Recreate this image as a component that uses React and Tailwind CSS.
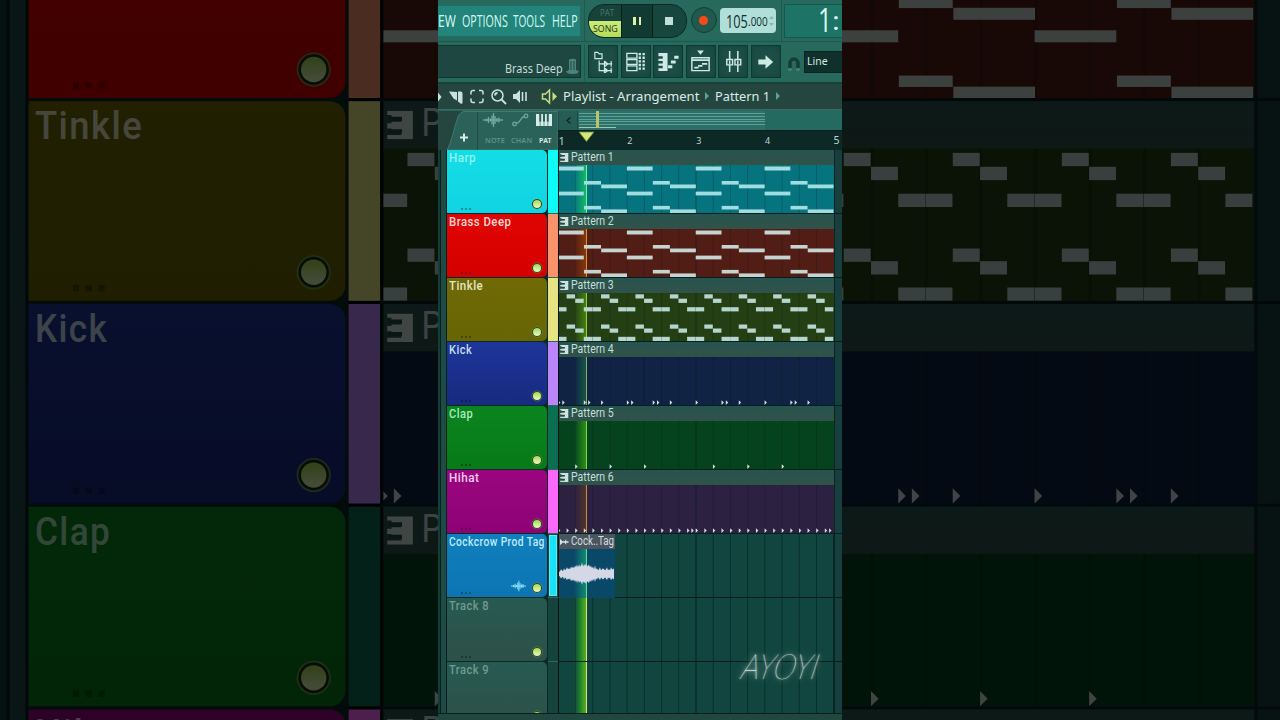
import { useLayoutEffect, useRef, useState } from "react";
import clsx from "clsx";

const BAR = 68.85;
const BEAT = BAR / 4;

const chordNotes = [0, 1, 2, 3].flatMap((bar) => [
	{ x: bar * BAR, y: 16.5, w: 25.8, h: 4 },
	{ x: bar * BAR + 26, y: 31, w: 17, h: 3.6 },
	{ x: bar * BAR + 43.2, y: 34.5, w: 25.8, h: 3.8 },
	{ x: bar * BAR, y: 41.6, w: 25.8, h: 3.8 },
	{ x: bar * BAR + 26, y: 55.9, w: 17, h: 3.6 },
	{ x: bar * BAR + 43.2, y: 59.4, w: 25.8, h: 3.8 },
]);

const arpHigh = [29.2, 16.3, 20.7, 29.2];
const arpLow = [58.8, 46.5, 50.5, 58.8];
const arpNotes = Array.from({ length: 32 }).flatMap((_, i) => [
	{ x: i * (BEAT / 2), y: arpHigh[i % 4], w: 8.5, h: 4.2 },
	{ x: i * (BEAT / 2), y: arpLow[i % 4], w: 8.5, h: 4.2 },
]);

const TRACKS = [
	{
		name: "Harp",
		nameWidth: 27,
		nameColor: "text-[#8ff3f0]",
		header: "bg-linear-to-b from-[#14dde4] to-[#12d3e4]",
		strip: "bg-[#0dfdf6]",
		pattern: "Pattern 1",
		body: "bg-[#06747f]",
		notes: chordNotes,
		noteColor: "#9fdde2",
		glow: "from-[#19a36000] to-[#12b868]",
		line: "bg-[#6df49a]",
	},
	{
		name: "Brass Deep",
		nameWidth: 62,
		nameColor: "text-[#ffd9d3]",
		header: "bg-linear-to-b from-[#e00503] to-[#d40000]",
		strip: "bg-[#f9936b]",
		pattern: "Pattern 2",
		body: "bg-[#521d14]",
		notes: chordNotes,
		noteColor: "#c6d3d0",
		glow: "from-[#8a3a0000] to-[#85380a]",
		line: "bg-[#e08a3c]",
	},
	{
		name: "Tinkle",
		nameWidth: 34,
		nameColor: "text-[#e6e6c4]",
		header: "bg-linear-to-b from-[#6f6a05] to-[#676505]",
		strip: "bg-[#e5e386]",
		pattern: "Pattern 3",
		body: "bg-[#243f14]",
		notes: arpNotes,
		noteColor: "#b6d5cd",
		glow: "from-[#3a6a0000] to-[#43800f]",
		line: "bg-[#a5c83a]",
	},
	{
		name: "Kick",
		nameWidth: 23,
		nameColor: "text-[#c5def2]",
		header: "bg-linear-to-b from-[#1d369a] to-[#182a80]",
		strip: "bg-[#bb86fb]",
		pattern: "Pattern 4",
		body: "bg-[#102344]",
		hits: [0, 1, 6, 7, 10, 16, 17, 22, 23, 26, 32, 38, 39, 42, 48, 54, 55, 58],
		glow: "from-[#145a4800] to-[#165648]",
		line: "bg-[#8fae62]",
	},
	{
		name: "Clap",
		nameWidth: 24,
		nameColor: "text-[#a9ecbd]",
		header: "bg-linear-to-b from-[#0b8420] to-[#087a18]",
		strip: "bg-[#0b6e50]",
		pattern: "Pattern 5",
		body: "bg-[#05431f]",
		hits: [4, 12, 20, 36, 44, 52],
		glow: "from-[#1a7a1000] to-[#2c8f18]",
		line: "bg-[#7fd83c]",
	},
	{
		name: "Hihat",
		nameWidth: 30,
		nameColor: "text-[#f6cdf0]",
		header: "bg-linear-to-b from-[#9a067f] to-[#8e0276]",
		strip: "bg-[#fa68fa]",
		pattern: "Pattern 6",
		body: "bg-[#2c2140]",
		hits: [...Array.from({ length: 32 }, (_, i) => i * 2), 31, 63],
		glow: "from-[#5a302000] to-[#50342a]",
		line: "bg-[#c78f3e]",
	},
	{
		name: "Cockcrow Prod Tag",
		nameWidth: 96,
		nameColor: "text-[#bfeaff]",
		header: "bg-linear-to-b from-[#0f80bd] to-[#0d74b2]",
		strip: "bg-[#16e2f8]",
		audio: "Cock..Tag",
	},
	{
		name: "Track 8",
		nameWidth: 40,
		nameColor: "text-[#6f9c92]",
		header: "bg-linear-to-b from-[#275a51] to-[#2c5148]",
	},
	{
		name: "Track 9",
		nameWidth: 40,
		nameColor: "text-[#6f9c92]",
		header: "bg-linear-to-b from-[#275a51] to-[#2c5148]",
	},
];

// peaks of the tag sample, one per pixel
const PEAKS = [
	1, 2, 3, 5, 4, 3, 6, 4, 5, 7, 5, 6, 5, 8, 6, 8, 6, 9, 7, 10, 7, 10, 8, 9, 12,
	8, 10, 9, 11, 8, 9, 10, 7, 9, 6, 8, 5, 9, 5, 6, 4, 5, 7, 4, 5, 6, 5, 4, 5, 7,
	4, 5, 4, 7, 5, 5, 6,
];

// Squeezes or stretches a label to a fixed width
const Fit = ({ w, className, children }) => {
	const ref = useRef(null);
	const [scale, setScale] = useState(1);

	useLayoutEffect(() => {
		setScale(w / ref.current.offsetWidth);
	}, [w]);

	return (
		<span className="flex whitespace-nowrap" style={{ width: w }}>
			<span
				ref={ref}
				className={clsx("shrink-0 origin-left", className)}
				style={{ transform: `scaleX(${scale})` }}
			>
				{children}
			</span>
		</span>
	);
};

const Led = () => (
	<svg className="size-[12px]" viewBox="0 0 12 12">
		<defs>
			<linearGradient id="led" x1="0" y1="0" x2="0" y2="1">
				<stop offset="0.1" stopColor="#a8dc58" />
				<stop offset="0.8" stopColor="#dff4b2" />
			</linearGradient>
		</defs>
		<circle cx="6" cy="6" r="5.1" fill="#16300f" stroke="#9fbf7a" strokeOpacity="0.6" strokeWidth="0.6" />
		<circle cx="6" cy="6" r="4" fill="url(#led)" />
	</svg>
);

const Waveform = ({ className, color = "#6fa79f" }) => (
	<svg className={className} viewBox="0 0 20 14" stroke={color} strokeWidth="1.3">
		<path d="M0 7H20M3.5 5.5v3M5.5 4v6M7.5 5.5v3M9 2.5v9M10.5 0v14M12 3v8M14 5v4M16 4.5v5" />
	</svg>
);

const ClipIcon = () => (
	<svg className="w-[8.5px] h-[9px] shrink-0" viewBox="0 0 9 10">
		<path
			d="M0 0H9V10H0V8.500H5V6.900H1.500V6.200H0V4.400H1.500V3.900H5V2.600H1.500V1.500H0Z"
			fill="#cfe3de"
		/>
		<path d="M0.500 2.100H5.200V3.500H0.500ZM0.500 6.500H5.200V7.900H0.500Z" fill="#244a45" />
	</svg>
);

const Playhead = ({ glow, line }) => (
	<div className="absolute left-0 inset-y-0 w-[29px] flex">
		<div className="w-[16px]" />
		<div className={clsx("w-[12px] bg-linear-to-r", glow)} />
		<div className={clsx("w-px", line)} />
	</div>
);

const GridLines = ({ from = 0, count = 17, soft }) => (
	<svg className="absolute inset-0 size-full" preserveAspectRatio="none">
		{Array.from({ length: count }, (_, i) => i + from).map((i) => (
			<line
				key={i}
				x1={i * BEAT + 0.3}
				x2={i * BEAT + 0.3}
				y1="0"
				y2="100%"
				stroke="#021615"
				strokeOpacity={(i % 8 === 0 ? 0.8 : 0.45) * (soft ? 0.5 : 1)}
			/>
		))}
	</svg>
);

const PatternClip = ({ track }) => (
	<div className="relative flex flex-col w-[276px] h-[63px]">
		<div className="h-[15px] flex items-center gap-[2px] pl-[2.5px] bg-linear-to-b from-[#27544f] to-[#305248]">
			<ClipIcon />
			<Fit w={43} className="text-[12px] leading-[15px] text-[#c5ded6]">
				{track.pattern}
			</Fit>
		</div>
		<div className={clsx("relative flex-1", track.body)}>
			<GridLines count={16} soft />
			<Playhead glow={track.glow} line={track.line} />
		</div>
		<svg className="absolute inset-0 w-[276px] h-[63px]">
			{track.notes?.map((n, i) => (
				<rect
					key={i}
					x={n.x}
					y={n.y}
					width={n.w}
					height={n.h}
					fill={track.noteColor}
				/>
			))}
			{track.hits?.map((hit) => (
				<path
					key={hit}
					d={`M${hit * (BEAT / 4)} 58.2l2.4 2.4l-2.4 2.4z`}
					fill="#cfe3e3"
				/>
			))}
		</svg>
	</div>
);

const AudioClip = ({ name }) => (
	<div className="relative flex flex-col w-[57px] h-[64px]">
		<div className="h-[15px] flex items-center gap-[2px] pl-[2.5px] bg-[#48575f]">
			<svg className="w-[8.5px] h-[8px] shrink-0" viewBox="0 0 9 8" fill="#dcdfe6">
				<path d="M0 0.5L3.5 4L0 7.5ZM3 3.3H9V4.7H3ZM4.2 4L6.5 1.2V6.8Z" />
			</svg>
			<Fit w={43} className="text-[12px] leading-[15px] text-[#d6dade]">
				{name}
			</Fit>
		</div>
		<div className="relative flex-1 bg-[#0a4867]">
			<Playhead glow="from-[#0a706800] to-[#128a72]" line="bg-[#5de08c]" />
			<svg className="absolute inset-0 size-full" viewBox="0 0 57 49">
				<path
					d={`M0 25${PEAKS.map((p, i) => `L${i} ${25 - p * 0.95}`).join("")}${PEAKS.map(
						(_, i) => {
							const x = PEAKS.length - 1 - i;
							return `L${x} ${25 + PEAKS[x] * 0.9}`;
						},
					).join("")}Z`}
					fill="#d3d7e6"
				/>
			</svg>
		</div>
	</div>
);

const TrackRow = ({ track }) => (
	<div className="flex h-16 shrink-0">
		<div className="w-[101.3px] bg-[#0b2a26] pb-px">
			<div
				className={clsx(
					"relative w-[100px] h-[63px] rounded-r-[5px] pl-[2px]",
					track.header,
				)}
			>
				<Fit
					w={track.nameWidth}
					className={clsx(
						"text-[12.5px] leading-[16px] tracking-[0.04em] font-medium",
						track.nameColor,
					)}
				>
					{track.name}
				</Fit>
				<div className="absolute left-[14px] bottom-[3.5px] flex gap-[2.4px]">
					{[0, 1, 2].map((i) => (
						<span key={i} className="size-[1.6px] bg-black/30" />
					))}
				</div>
				{track.audio && (
					<Waveform
						className="absolute left-[64px] top-[46px] w-[15px] h-[12px]"
						color="#8fe6ff"
					/>
				)}
				<div className="absolute left-[84.3px] top-[48px]">
					<Led />
				</div>
			</div>
		</div>
		<div
			className={clsx(
				"w-[9.5px] h-[63px]",
				track.strip || "bg-[#15443d]",
				track.audio && "border border-[#0a4a58] ring-1 ring-inset ring-[#7be0e0]",
			)}
		/>
		<div className="relative flex-1 border-b border-[#04201e] bg-[#10463f]">
			<GridLines from={0} />
			{!track.pattern && (
				<Playhead glow="from-[#16604600] via-[#1d7f2c] to-[#58b016]" line="bg-[#d6e27a]" />
			)}
			<div className="absolute left-0 top-0">
				{track.pattern && <PatternClip track={track} />}
				{track.audio && <AudioClip name={track.audio} />}
			</div>
			<div className="absolute left-0 inset-y-0 w-[0.7px] bg-[#03110f]" />
			<div className="absolute left-[276px] inset-y-0 right-0 border-l border-[#0a2624] bg-[#173f3e]" />
		</div>
	</div>
);

const TrackArea = ({ tracks, className }) => (
	<div className={clsx("flex overflow-hidden font-['Roboto',sans-serif]", className)}>
		<div className="w-[9.2px] flex bg-[#1f4b45] border-r border-[#06201d]">
			<div className="w-[3px] bg-[#143c38] border-r border-[#071f1d]" />
		</div>
		<div className="flex-1 flex flex-col">
			{tracks.map((track) => (
				<TrackRow key={track.name} track={track} />
			))}
		</div>
	</div>
);

const ToolButton = ({ children }) => (
	<div className="w-[30px] h-[33px] border border-[#0c3a34] bg-[#1d4e47] shadow-[inset_0_0_6px_#16423b] grid place-items-center">
		<svg className="size-[23px]" viewBox="0 0 24 24" fill="none" stroke="#cdeae4" strokeWidth="1.5">
			{children}
		</svg>
	</div>
);

const Transport = () => (
	<div className="h-[42px] flex items-start border-b border-[#1a594f]">
		<div className="w-[142px] h-[32px] mt-[5px] bg-[#22847a] flex items-center border-y border-[#1c6f66] overflow-hidden font-['Open_Sans',sans-serif] text-[16px] leading-[28px] pb-[1px] text-[#d6fbf5]">
			<Fit w={18}>EW</Fit>
			<span className="w-[6px]" />
			<Fit w={46}>OPTIONS</Fit>
			<span className="w-[5px]" />
			<Fit w={32}>TOOLS</Fit>
			<span className="w-[7px]" />
			<Fit w={26}>HELP</Fit>
		</div>
		<div className="ml-[4px] w-px h-[42px] bg-[#1a5a50]" />
		<div className="ml-[3px] mt-[4px] w-[99px] h-[34px] rounded-[16px] overflow-hidden border border-[#0a2a24] bg-[#103a32] flex">
			<div className="w-[33px] flex flex-col items-center font-['Open_Sans',sans-serif] border-r border-[#06201b]">
				<div className="h-[16px] w-full bg-[#174239] text-[9px] leading-[16px] flex justify-center pl-[3px] text-[#4c7a6f]">
					<Fit w={14}>PAT</Fit>
				</div>
				<div className="flex-1 w-full grid place-items-center bg-linear-to-b from-[#cdea7c] to-[#b5dc5a] text-[#1c3418] text-[9.5px] leading-[12px]">
					<Fit w={25}>SONG</Fit>
				</div>
			</div>
			<div className="w-[31px] flex items-center justify-center gap-[3px] border-r border-[#06201b]">
				<span className="w-[2.5px] h-[8px] bg-[#dff0a8]" />
				<span className="w-[2.5px] h-[8px] bg-[#dff0a8]" />
			</div>
			<div className="flex-1 flex items-center pl-[12px] bg-[#17463d]">
				<span className="size-[8px] bg-[#c2ded8]" />
			</div>
		</div>
		<div className="ml-[3.5px] mt-[7px] size-[26px] rounded-full border border-[#123f37] bg-[#22594f] grid place-items-center">
			<span className="size-[9px] rounded-full bg-[#fb4a16]" />
		</div>
		<div className="ml-[3.5px] mt-[8px] w-[56px] h-[25px] rounded-[4px] bg-[#b0ded8] flex items-center pl-[6px] font-['Open_Sans',sans-serif] text-[#12302c]">
			<Fit w={22} className="text-[18px] leading-6">
				105
			</Fit>
			<Fit w={20} className="text-[12px] leading-6 pt-[3px]">
				.000
			</Fit>
			<svg className="ml-[1px] w-[5px] h-[12px]" viewBox="0 0 5 12" fill="#8cb8b2">
				<path d="M0 4L2.5 1L5 4ZM0 8L2.5 11L5 8Z" />
			</svg>
		</div>
		<div className="ml-[5px] w-px h-[42px] bg-[#1a5a50]" />
		<div className="ml-[2px] mt-[4px] flex-1 h-[34px] border border-r-0 border-[#16564c] bg-[#1d7466] pl-[33px] overflow-hidden font-['Open_Sans',sans-serif] text-[33px] leading-[30px] text-[#d9f7ee] flex">
			<Fit w={14}>1</Fit>
			<Fit w={8} className="text-[26px]">:</Fit>
		</div>
	</div>
);

const Shortcuts = () => (
	<div className="h-[42px] pt-[3px] flex items-start border-b-2 border-[#164239]">
		<div className="w-[143px] h-[33px] bg-[#1e4741] border border-l-0 border-[#113630] flex items-end justify-end pr-[1px] font-['Noto_Sans',sans-serif] text-[12px] leading-[16px] text-[#c3dcd6]">
			<Fit w={58}>Brass Deep</Fit>
			<svg className="ml-[3px] mb-[3px] w-[13px] h-[16px]" viewBox="0 0 13 16">
				<path
					d="M3 1.5Q6.5 0 10 1.5V12L13 13.5Q12 16 6.5 16T0 13.5L3 12Z"
					fill="#4a857b"
				/>
				<path d="M5 3V12M8 3V12" stroke="#1f4b44" strokeWidth="1" />
			</svg>
		</div>
		<div className="ml-[3px] w-px h-[36px] bg-[#1a5a50]" />
		<div className="ml-[3px] flex gap-[2.6px]">
			<ToolButton>
				<path d="M3 9V2.5H6L7.5 4H10.5V9ZM7.5 11V21.5H12M7.5 14.500H12" strokeWidth="1.2" />
				<path d="M11 14.5H21M13 11.500V17.500L16.500 14.500L13 11.500M20 11.500V17.500M13 18.500V24L16.500 21.500ZM11 21.500H21M20 18.500V24" strokeWidth="1.2" />
			</ToolButton>
			<ToolButton>
				<path d="M3 3.500H13.500V8.500H3ZM3 10H13.500V15H3ZM3 16.500H13.500V21.500H3Z" strokeWidth="1.4" />
				<path d="M16.500 3V22M20.500 3V22" strokeWidth="2.4" strokeDasharray="2.500 1.300" />
			</ToolButton>
			<ToolButton>
				<path d="M1.500 3H11V22H1.500V19H6V16.500H1.500V14H6V11.500H1.500V9H6V6.500H1.500Z" fill="#cdeae4" stroke="none" />
				<path d="M11.500 17.500H16M14.500 12.500H19.500M18 7.500H22.500" strokeWidth="3" />
			</ToolButton>
			<ToolButton>
				<path d="M8.500 0.500H15.500L12 5Z" fill="#cdeae4" stroke="none" />
				<path d="M3 8H21V21.500H3Z" strokeWidth="1.5" />
				<path d="M3 10.500H21M5.500 18.500H10M9.500 16.500H14M13.500 14.500H19" strokeWidth="1.8" />
			</ToolButton>
			<ToolButton>
				<path d="M8 1V23M16.500 1V23" strokeWidth="1.6" />
				<path d="M5 10H11V15.500H5ZM13.500 10H19.500V15.500H13.500Z" fill="#1d4e47" />
				<path d="M8 11V14.500M16.500 11V14.500" />
			</ToolButton>
			<ToolButton>
				<path d="M4.500 10H12V5.500L20 12.500L12 19.500V15H4.500Z" fill="#cdeae4" stroke="none" />
			</ToolButton>
		</div>
		<svg className="ml-[7px] mt-[12px] w-[12px] h-[14px]" viewBox="0 0 12 14">
			<path d="M2 11V6A4 4 0 0 1 10 6V11" fill="none" stroke="#153f38" strokeWidth="3.6" />
			<path d="M0.200 12.500H3.800M8.200 12.500H11.800" stroke="#4e8a7e" strokeWidth="2" />
		</svg>
		<div className="ml-[4px] mt-[6px] flex-1 h-[22px] bg-[#10302b] border border-r-0 border-[#0b2420] pl-[2px] font-['Noto_Sans',sans-serif] text-[11.5px] leading-[17px] text-[#d3e9e2]">
			<Fit w={21}>Line</Fit>
		</div>
	</div>
);

const Crumb = () => (
	<svg className="w-[4px] h-[8px] shrink-0" viewBox="0 0 4 8">
		<path d="M0 0L4 4L0 8Z" fill="#5aa297" />
	</svg>
);

const TitleBar = () => (
	<div className="h-[26px] flex items-center bg-[#25463f] border-b border-[#3b6a61] font-['Noto_Sans',sans-serif] text-[13px] leading-[24px] text-[#d6ece6]">
		<svg className="w-[125px] h-[25px] shrink-0" viewBox="0 0.500 125 25" fill="none" stroke="#c9e3dc" strokeWidth="1.5">
			<path d="M0 9L3.500 13.500L0 18Z" fill="#c9e3dc" stroke="none" />
			<path d="M11 8L19 8.500V17L15.500 15Z" fill="#c9e3dc" stroke="none" />
			<path d="M20 8H22.500Q24.500 8 24.500 10V19Q24.500 21 22.500 20L20 18Z" fill="#c9e3dc" stroke="none" />
			<path d="M33 11V9Q33 7 35 7H37M41 7H43Q45 7 45 9V11M45 15V17Q45 19 43 19H41M37 19H35Q33 19 33 17V15" />
			<circle cx="59.500" cy="12" r="5.500" />
			<path d="M57 12A2.500 2.500 0 0 1 59.500 9.500M63.500 16L68 20.500" strokeWidth="1.8" />
			<path d="M75 10.500H78L82 6.500V19.500L78 15.500H75Z" fill="#c9e3dc" stroke="none" />
			<path d="M84.500 8.500V17.500M88 8.500V17.500" strokeWidth="1.6" />
			<path d="M104.500 10.500H107.500L111.500 6.500V19.500L107.500 15.500H104.500Z" stroke="#c8dd80" strokeWidth="1.500" />
			<path d="M114.500 8.500L119 13L114.500 17.500Z" fill="#c8dd80" stroke="none" />
		</svg>
		<div className="flex items-center pb-px">
			<Fit w={136}>Playlist - Arrangement</Fit>
			<span className="w-[6px]" />
			<Crumb />
			<span className="w-[5.5px]" />
			<Fit w={55}>Pattern 1</Fit>
			<span className="w-[6px]" />
			<Crumb />
		</div>
	</div>
);

const PickerHeader = () => (
	<div className="relative w-[120px] h-[39px] bg-[#25463f]">
		<svg className="absolute inset-0 size-full" viewBox="0 0 120 39">
			<path
				d="M9 39C13 33 16 17 20 6Q22 0.500 27 0.500H120V39Z"
				fill="#2a6158"
				stroke="#45776d"
			/>
			<path d="M39.500 1V39" stroke="#1d4e46" />
			<path d="M26 22.500V30.500M22 26.500H30" stroke="#d6ece6" strokeWidth="2" />
		</svg>
		<div className="absolute left-[45px] top-0 w-[74px] flex flex-col font-['Noto_Sans',sans-serif] text-[6.5px] leading-[9px] font-semibold text-[#5f928a]">
			<div className="flex h-[18px] items-center">
				<Waveform className="w-[20px] h-[14px]" />
				<svg className="ml-[9px] w-[17px] h-[14px]" viewBox="0 0 17 14" fill="none" stroke="#6fa79f" strokeWidth="1.3">
					<circle cx="2.500" cy="11" r="1.800" />
					<circle cx="14" cy="3" r="1.800" />
					<path d="M4 10.500Q7 10 8.500 7T12.500 3.500" />
				</svg>
				<svg className="ml-[7px] w-[16px] h-[12px]" viewBox="0 0 16 12">
					<path d="M0 0H16V12H0Z" fill="#d6ece6" />
					<path d="M4.200 0V7.500M8 0V7.500M11.800 0V7.500" stroke="#2a6158" strokeWidth="2" />
					<path d="M4.200 7V12M8 7V12M11.800 7V12" stroke="#2a6158" strokeWidth="0.600" />
				</svg>
			</div>
			<div className="flex h-[20px] items-center pl-[2px] pt-[2px]">
				<Fit w={20} className="tracking-wide">NOTE</Fit>
				<span className="w-[6px]" />
				<Fit w={21} className="tracking-wide">CHAN</Fit>
				<span className="w-[7px]" />
				<Fit w={13} className="tracking-wide text-[#e0f2ec]">PAT</Fit>
			</div>
		</div>
	</div>
);

const Ruler = () => (
	<div className="flex-1 flex flex-col">
		<div className="h-[19px] flex bg-[#246a60]">
			<div className="w-[20px] grid place-items-center bg-[#255c54] border-x border-[#1b4c45]">
				<svg className="w-[5px] h-[7px]" viewBox="0 0 5 7" fill="none" stroke="#0a2421" strokeWidth="1.2">
					<path d="M4.500 0.500L1 3.500L4.500 6.500" />
				</svg>
			</div>
			<div className="relative ml-px w-[186px] py-[2px] flex flex-col justify-between bg-[#2b716a]">
				{[0, 1, 2, 3, 4].map((i) => (
					<div key={i} className="h-px bg-[#5ea096]" />
				))}
				<div className="h-px w-[37px] bg-[#9ac9b4]" />
				<div className="absolute left-[17px] top-0 h-[17px] w-[3px] bg-[#b8c46a]" />
			</div>
		</div>
		<div className="relative h-[20px] flex bg-[#0c2926] border-t border-[#081e1c] font-['Noto_Sans',sans-serif] text-[#b9d8d0]">
			{[1, 2, 3, 4].map((n) => (
				<div
					key={n}
					className={clsx(
						"w-[68.850px] shrink-0 pl-[0.500px] leading-[20px]",
						n === 1 ? "text-[11px]" : "text-[9px]",
					)}
				>
					{n}
				</div>
			))}
			<div className="text-[10.500px] leading-[18px]">5</div>
			<svg className="absolute left-[20px] top-0 w-[17px] h-[12px]" viewBox="0 0 17 12">
				<path d="M1 1H16L8.500 10.500Z" fill="#d3ea78" stroke="#6b8040" strokeWidth="0.800" />
			</svg>
		</div>
	</div>
);

const App = () => {
	return (
		<div className="relative w-full h-screen overflow-hidden bg-black flex justify-center">
			{/* enlarged, dimmed copy of the playlist fills the sides */}
			<div
				aria-hidden="true"
				className="absolute left-[438px] top-px w-[404px] h-[720px] pt-[214px] scale-[3.168] opacity-[0.3]"
			>
				<TrackArea tracks={TRACKS.slice(1, 6)} />
			</div>

			<div className="relative w-[404px] h-[720px] flex flex-col overflow-hidden bg-[#28695e]">
				<Transport />
				<Shortcuts />
				<TitleBar />
				<div className="flex h-[39px] mt-px shrink-0">
					<PickerHeader />
					<Ruler />
				</div>
				<TrackArea tracks={TRACKS} className="h-[563px] shrink-0" />
				<div className="h-[7px] shrink-0 bg-[#20483f] border-t border-[#06201d]" />

				<div className="absolute left-[305px] top-[644px] -skew-x-12 font-['Lato',sans-serif] italic font-thin text-[35px] leading-[42px] text-[#f4faf8] [text-shadow:0_0_2px_#ffffff,0_0_6px_#ffffff,0_0_10px_#d8f0ec]">
					<Fit w={76}>AYOYI</Fit>
				</div>
			</div>
		</div>
	);
};

export default App;
